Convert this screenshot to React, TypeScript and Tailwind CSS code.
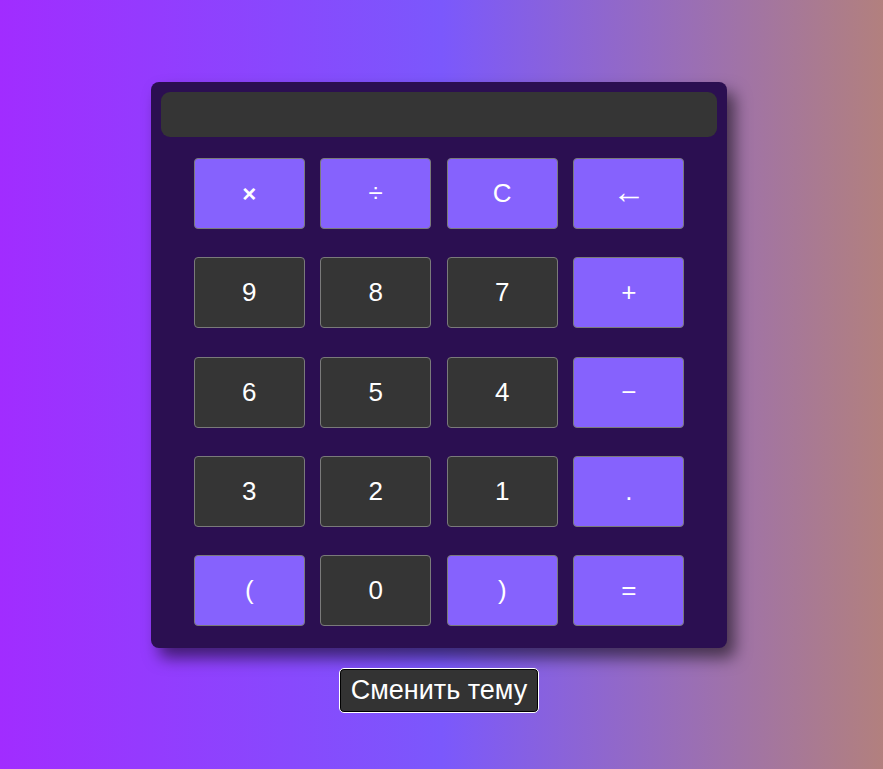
import React from "react";

type Key = { label: string; accent: boolean };

const keys: Key[] = [
  { label: "×", accent: true },
  { label: "÷", accent: true },
  { label: "C", accent: true },
  { label: "←", accent: true },
  { label: "9", accent: false },
  { label: "8", accent: false },
  { label: "7", accent: false },
  { label: "+", accent: true },
  { label: "6", accent: false },
  { label: "5", accent: false },
  { label: "4", accent: false },
  { label: "−", accent: true },
  { label: "3", accent: false },
  { label: "2", accent: false },
  { label: "1", accent: false },
  { label: ".", accent: true },
  { label: "(", accent: true },
  { label: "0", accent: false },
  { label: ")", accent: true },
  { label: "=", accent: true },
];

export default function App() {
  return (
    <div
      className="min-h-screen w-full flex flex-col items-center pt-[82px] pr-[5px] bg-[linear-gradient(to_right,#a12cff_0%,#7b58fc_50%,#b2807e_100%)]"
      style={{ fontFamily: '"Liberation Sans", Arial, sans-serif' }}
    >
      <div className="w-[576px] bg-[#2b0f51] rounded-[8px] p-[10px] pb-[22px] shadow-[8px_10px_16px_rgba(0,0,0,0.55)]">
        <div className="h-[45px] w-full bg-[#353535] rounded-[9px]" />
        <div className="mt-[21px] grid grid-cols-[repeat(4,111px)] justify-center gap-x-[15.5px] gap-y-[28.25px]">
          {keys.map((k, i) => (
            <button
              key={i}
              className={
                "h-[71px] w-[111px] rounded-[4px] border border-[#7a7a7a] text-white text-[26px] flex items-center justify-center " +
                (k.accent ? "bg-[#8662fd]" : "bg-[#353535]")
              }
            >
              {k.label === "←" ? (
                <span className="text-[33px] leading-none -translate-y-[2px]">←</span>
              ) : k.label === "×" ? (
                <span className="text-[24px] font-bold">×</span>
              ) : (
                k.label
              )}
            </button>
          ))}
        </div>
      </div>
      <button className="mt-[20px] h-[45px] px-[11px] rounded-[5px] border border-white bg-[#333333] shadow-[inset_0_0_0_1px_#000] text-white text-[27px]">
        Сменить тему
      </button>
    </div>
  );
}
